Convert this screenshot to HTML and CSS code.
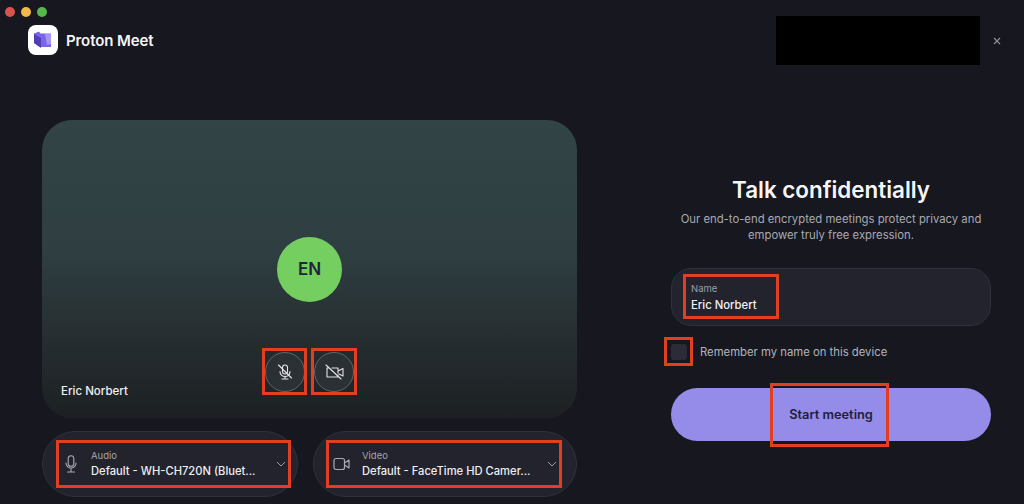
FILE: index.html
```html
<!DOCTYPE html>
<html lang="en">
<head>
<meta charset="utf-8">
<title>Proton Meet</title>
<link rel="stylesheet" href="styles.css">
</head>
<body>
<div class="page">
  <div class="traffic">
    <span class="dot red"></span><span class="dot yellow"></span><span class="dot green"></span>
  </div>
  <header class="header">
    <div class="brand">
      <div class="logo">
        <svg width="20" height="20" viewBox="0 0 20 20"><path d="M1 3.5 L6 1.5 L7.5 3.5 L18 3.5 L18 17 L7 17 L1 13 Z" fill="#7b63ee"/><path d="M1 4 L8 8 L8 18 L1 13 Z" fill="#4f3fb5"/><path d="M12 4 H18 V14 L14 15 Z" fill="#a596f7"/></svg>
      </div>
      <span class="brand-name">Proton Meet</span>
    </div>
    <div class="header-right">
      <div class="redacted"></div>
      <svg class="close" width="8" height="8" viewBox="0 0 8 8"><path d="M1 1 L7 7 M7 1 L1 7" stroke="#8f909a" stroke-width="1.1" fill="none"/></svg>
    </div>
  </header>
  <main class="main">
    <section class="left">
      <div class="video">
        <div class="avatar">EN</div>
        <div class="video-name">Eric Norbert</div>
        <div class="toggles">
          <div class="toggle-box mark">
            <div class="round">
              <svg width="18" height="18" viewBox="0 0 18 18" fill="none" stroke="#e4e4e8" stroke-width="1.1" stroke-linecap="round"><rect x="6.5" y="2" width="5" height="9" rx="2.5"/><path d="M4 8.5 a5 5 0 0 0 10 0 M9 13.5 V16 M6 16 H12 M2.5 2 L15.5 15"/></svg>
            </div>
          </div>
          <div class="toggle-box mark">
            <div class="round">
              <svg width="19" height="18" viewBox="0 0 19 18" fill="none" stroke="#e4e4e8" stroke-width="1.1" stroke-linecap="round" stroke-linejoin="round"><path d="M4 5 H2 V14 H13 V12 M7 5 H13 V10 M13 8 L18 5.5 V13 L14 11 M1 2 L16 16"/></svg>
            </div>
          </div>
        </div>
      </div>
      <div class="devices">
        <div class="device device-audio">
          <div class="device-box mark">
            <svg class="device-icon" width="12" height="18" viewBox="0 0 12 18" fill="none" stroke="#a9aab2" stroke-width="1.1" stroke-linecap="round"><rect x="3.2" y="0.8" width="5.6" height="10.5" rx="2.8"/><path d="M1 8 a5 5 0 0 0 10 0 M6 13.2 V17 M2.5 17 H9.5"/></svg>
            <div class="device-text">
              <div class="device-label">Audio</div>
              <div class="device-value">Default - WH-CH720N (Bluet...</div>
            </div>
            <svg class="chevron" width="10" height="6" viewBox="0 0 10 6" fill="none" stroke="#9a9ba4" stroke-width="1"><path d="M1 1 L5 5 L9 1"/></svg>
          </div>
        </div>
        <div class="device device-video">
          <div class="device-box mark">
            <svg class="device-icon" width="17" height="14" viewBox="0 0 17 14" fill="none" stroke="#a9aab2" stroke-width="1.2" stroke-linejoin="round"><rect x="1" y="1.5" width="10.5" height="11" rx="2"/><path d="M11.5 6 L16 3 V11 L11.5 8"/></svg>
            <div class="device-text">
              <div class="device-label">Video</div>
              <div class="device-value">Default - FaceTime HD Camer...</div>
            </div>
            <svg class="chevron" width="10" height="6" viewBox="0 0 10 6" fill="none" stroke="#9a9ba4" stroke-width="1"><path d="M1 1 L5 5 L9 1"/></svg>
          </div>
        </div>
      </div>
    </section>
    <section class="right">
      <h1 class="title">Talk confidentially</h1>
      <p class="subtitle">Our end-to-end encrypted meetings protect privacy and<br>empower truly free expression.</p>
      <div class="name-field">
        <div class="name-inner mark">
          <div class="name-label">Name</div>
          <div class="name-value">Eric Norbert</div>
        </div>
      </div>
      <div class="remember">
        <span class="check-box mark"><span class="checkbox"></span></span>
        <span class="remember-text">Remember my name on this device</span>
      </div>
      <div class="start"><span class="start-inner mark">Start meeting</span></div>
    </section>
  </main>
</div>
</body>
</html>
```
FILE: styles.css
```css
* { box-sizing: border-box; }
html, body { margin: 0; padding: 0; }
body {
  width: 1024px;
  height: 504px;
  overflow: hidden;
  background: #16171f;
  color: #fff;
  font-family: Inter, "Liberation Sans", sans-serif;
}
.page { position: relative; width: 1024px; height: 504px; }
.traffic { position: absolute; left: 5px; top: 7px; display: flex; gap: 6px; }
.dot { width: 10px; height: 10px; border-radius: 50%; }
.red { background: #d9534d; }
.yellow { background: #f0b94a; }
.green { background: #57b84a; }

.header {
  display: flex;
  justify-content: space-between;
  align-items: flex-start;
  height: 120px;
  padding: 16px 23px 0 28px;
}
.brand { display: flex; align-items: center; gap: 8px; margin-top: 9px; }
.logo {
  width: 30px;
  height: 30px;
  border-radius: 8px;
  background: #fff;
  display: flex;
  align-items: center;
  justify-content: center;
}
.brand-name { font-size: 15px; font-weight: 600; letter-spacing: -0.1px; color: #f4f4f6; }
.header-right { display: flex; align-items: center; gap: 13px; }
.redacted { width: 204px; height: 49px; background: #000; }
.close { display: block; }

.main { display: flex; padding-left: 42px; }
.left { width: 535px; }
.video {
  position: relative;
  height: 298px;
  border-radius: 30px;
  background: linear-gradient(180deg, #324446 0%, #2e3e41 45%, #272f32 70%, #1c2023 100%);
  display: flex;
  align-items: center;
  justify-content: center;
}
.avatar {
  width: 65px;
  height: 65px;
  border-radius: 50%;
  background: #74cf60;
  color: #22253a;
  font-size: 17px;
  font-weight: 600;
  display: flex;
  align-items: center;
  justify-content: center;
}
.video-name {
  position: absolute;
  left: 19px;
  bottom: 20px;
  font-size: 11.5px;
  font-weight: 500;
  color: #f0f0f2;
}
.toggles {
  position: absolute;
  left: 223px;
  bottom: 26px;
  display: flex;
  gap: 10px;
}
.toggle-box { width: 39px; height: 41px; display: flex; align-items: center; justify-content: center; }
.toggle-box + .toggle-box { width: 40px; }
.round {
  flex: none;
  width: 40px;
  height: 40px;
  border-radius: 50%;
  border: 1px solid #5d666a;
  background: #2a3033;
  display: flex;
  align-items: center;
  justify-content: center;
}
.mark { outline: 3px solid #e23e22; outline-offset: 0; }

.devices { display: grid; grid-template-columns: 256px 264px; gap: 15px; margin-top: 13px; }
.device {
  height: 66px;
  border-radius: 33px;
  border: 1px solid #2f3039;
  background: #22232d;
  display: flex;
  align-items: center;
}
.device-box { flex: 1; height: 42px; display: flex; align-items: center; }
.device-audio .device-box { margin: 0 9px 0 16px; padding: 0 2px 0 6px; }
.device-video .device-box { margin: 0 17px 0 15px; padding: 0 2px 0 4px; }
.device-audio .device-text { margin-left: 14px; }
.device-video .device-text { margin-left: 12px; }
.device-icon { flex: none; }
.device-text { flex: 1; min-width: 0; }
.device-label { font-size: 9.5px; color: #a5a6ae; line-height: 14px; }
.device-value { font-size: 11.2px; font-weight: 500; color: #eeeef0; line-height: 17px; white-space: nowrap; }
.chevron { flex: none; }

.right { width: 320px; margin-left: 94px; display: flex; flex-direction: column; align-items: stretch; }
.title {
  margin: 56px 0 0;
  font-size: 22.4px;
  line-height: 28px;
  font-weight: 600;
  text-align: center;
  color: #f6f6f8;
}
.subtitle {
  margin: 7px 0 0;
  font-size: 11.3px;
  line-height: 16px;
  text-align: center;
  color: #a9aab2;
}
.name-field {
  margin-top: 25px;
  height: 58px;
  border-radius: 20px;
  border: 1px solid #2f3039;
  background: #22232d;
  padding: 8px 0 0 14px;
}
.name-inner { width: 90px; height: 39px; padding: 5px 0 0 5px; }
.name-label { font-size: 9.5px; color: #9d9ea7; line-height: 14px; }
.name-value { font-size: 11.3px; font-weight: 500; color: #f2f2f4; line-height: 18px; }
.remember { display: flex; align-items: center; margin-top: 14px; height: 23px; margin-left: -4px; }
.check-box {
  width: 23px;
  height: 23px;
  display: flex;
  align-items: center;
  justify-content: center;
  margin-right: 10px;
}
.checkbox { width: 16px; height: 16px; border-radius: 3px; background: #2b2c38; }
.remember-text { font-size: 11.3px; color: #b3b4bb; }
.start {
  margin-top: 25px;
  height: 53px;
  border-radius: 27px;
  background: #958cea;
  display: flex;
  justify-content: center;
  align-items: center;
}
.start-inner {
  flex: none;
  width: 113px;
  height: 58px;
  margin-right: 3px;
  padding-left: 3px;
  display: flex;
  align-items: center;
  justify-content: center;
  font-size: 12.8px;
  font-weight: 600;
  color: #22203a;
}
```
